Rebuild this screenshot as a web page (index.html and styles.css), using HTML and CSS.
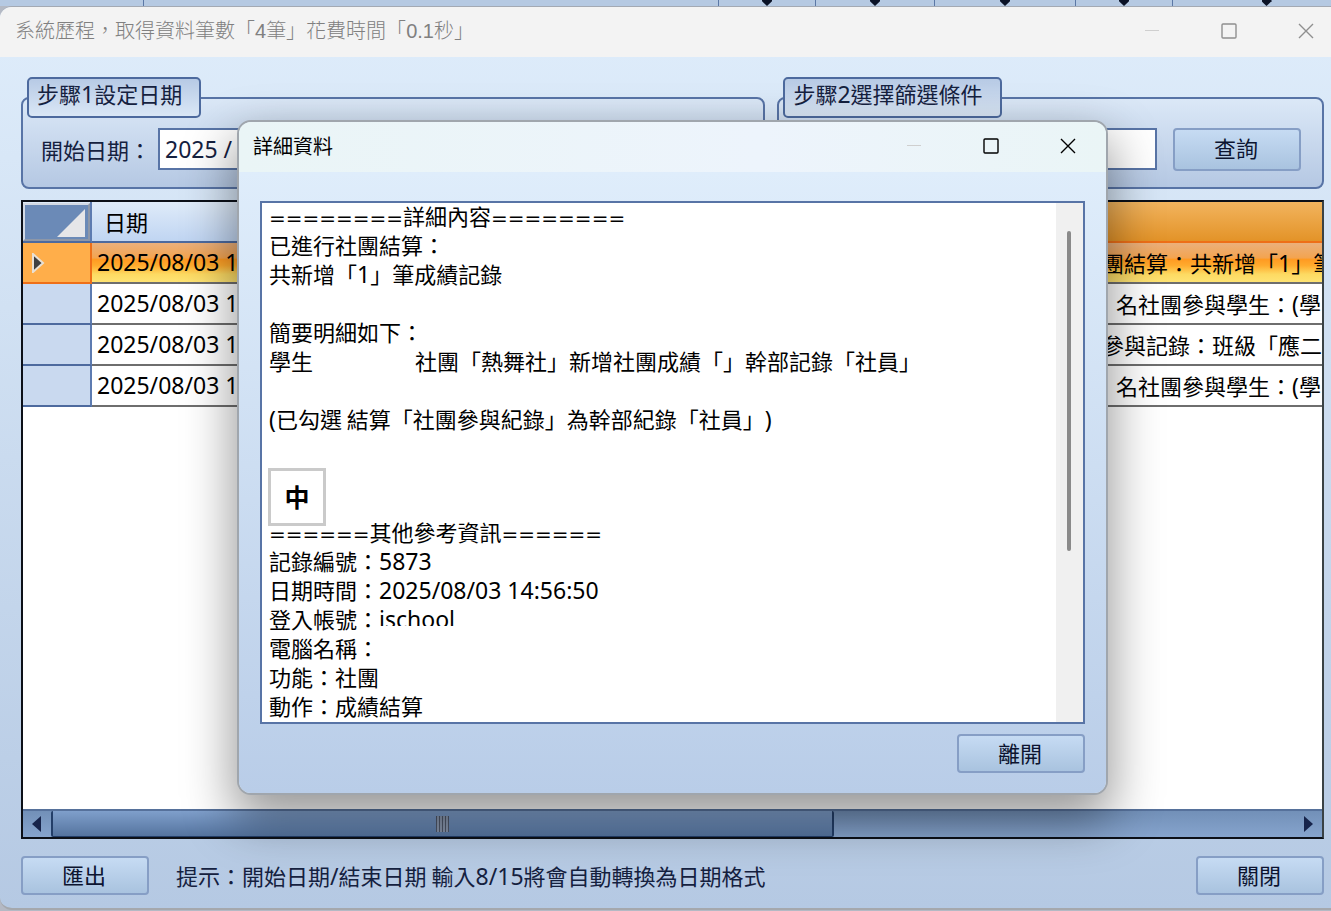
FILE: index.html
```html
<!DOCTYPE html>
<html lang="zh-Hant">
<head>
    <meta charset="UTF-8">
    <meta name="viewport" content="width=device-width, initial-scale=1.0">
    <title>系統歷程</title>
    <link rel="stylesheet" href="styles.css">
</head>
<body>
    <!-- Toolbar of the main application -->
    <div class="toolbar">
        <div class="tool wide-a"></div>
        <div class="tool wide-b"></div>
        <div class="tool w97"><i class="arrow"></i></div>
        <div class="tool w119"><i class="arrow"></i></div>
        <div class="tool w141"><i class="arrow"></i></div>
        <div class="tool w97"><i class="arrow"></i></div>
        <div class="tool w188"><i class="arrow"></i></div>
    </div>

    <div class="window">
        <div class="title-bar">
            <h1>系統歷程，取得資料筆數「<span class="title-num">4</span>筆」花費時間「<span class="title-num">0.1</span>秒」</h1>
            <div class="controls">
                <button class="control disabled" aria-label="最小化"><svg width="16" height="16"><path d="M1 7.5H15"/></svg></button>
                <button class="control" aria-label="最大化"><svg width="16" height="16"><rect x="1" y="1" width="14" height="14" rx="1"/></svg></button>
                <button class="control" aria-label="關閉"><svg width="16" height="16"><path d="M1 1L15 15M15 1L1 15"/></svg></button>
            </div>
        </div>

        <div class="window-body">
            <div class="steps">
                <fieldset class="step">
                    <legend>步驟<span class="num">1</span>設定日期</legend>
                    <div class="step-row">
                        <label for="startDate">開始日期：</label>
                        <input type="text" id="startDate" class="text-box" value="2025 /">
                    </div>
                </fieldset>
                <fieldset class="step">
                    <legend>步驟<span class="num">2</span>選擇篩選條件</legend>
                    <div class="step-row filter-row">
                        <input type="text" class="text-box" aria-label="篩選條件">
                        <button class="btn">查詢</button>
                    </div>
                </fieldset>
            </div>

            <div class="grid">
                <table class="log">
                    <thead>
                        <tr>
                            <th class="corner"><div class="corner-box"><svg width="28" height="28"><path d="M28 0V28H0Z" fill="#e6e6e8"/></svg></div></th>
                            <th class="date">日期</th>
                            <th class="desc"></th>
                        </tr>
                    </thead>
                    <tbody>
                        <tr class="selected">
                            <th><svg width="14" height="20"><path d="M2 1L12 10L2 19Z" fill="#404040" stroke="#e8e0d4" stroke-width="2"/></svg></th>
                            <td class="num">2025/08/03 1</td>
                            <td>已進行社團結算：共新增「<span class="num">1</span>」筆</td>
                        </tr>
                        <tr>
                            <th></th>
                            <td class="num">2025/08/03 1</td>
                            <td><span class="blank"></span>名社團參與學生：<span class="num">(</span>學</td>
                        </tr>
                        <tr>
                            <th></th>
                            <td class="num">2025/08/03 1</td>
                            <td><span class="blank short"></span>參與記錄：班級「應二</td>
                        </tr>
                        <tr>
                            <th></th>
                            <td class="num">2025/08/03 1</td>
                            <td><span class="blank"></span>名社團參與學生：<span class="num">(</span>學</td>
                        </tr>
                    </tbody>
                </table>
                <div class="h-scroll">
                    <button class="scroll-btn" aria-label="向左"><svg width="10" height="16"><path d="M9 0V16L0 8Z" fill="#17244b"/></svg></button>
                    <div class="h-track"><div class="h-thumb"><i class="grip"></i></div></div>
                    <button class="scroll-btn" aria-label="向右"><svg width="10" height="16"><path d="M1 0V16L10 8Z" fill="#17244b"/></svg></button>
                </div>
            </div>

            <div class="footer">
                <button class="btn">匯出</button>
                <p class="hint">提示：開始日期<span class="num">/</span>結束日期 輸入<span class="num">8/15</span>將會自動轉換為日期格式</p>
                <button class="btn">關閉</button>
            </div>
        </div>
    </div>

    <!-- Detail dialog -->
    <div class="dialog" role="dialog" aria-labelledby="dialogTitle">
        <div class="title-bar">
            <h2 id="dialogTitle">詳細資料</h2>
            <div class="controls">
                <button class="control disabled" aria-label="最小化"><svg width="16" height="16"><path d="M1 7.5H15"/></svg></button>
                <button class="control" aria-label="最大化"><svg width="16" height="16"><rect x="1" y="1" width="14" height="14" rx="1"/></svg></button>
                <button class="control" aria-label="關閉"><svg width="16" height="16"><path d="M1 1L15 15M15 1L1 15"/></svg></button>
            </div>
        </div>
        <div class="dialog-body">
            <div class="detail">
                <div class="detail-text">
                    <div class="content">
                        <p><span class="rule">========</span>詳細內容<span class="rule">========</span></p>
                        <p>已進行社團結算：</p>
                        <p>共新增「<span class="num">1</span>」筆成績記錄</p>
                        <p></p>
                        <p>簡要明細如下：</p>
                        <p>學生<span class="blank"></span>社團「熱舞社」新增社團成績「」幹部記錄「社員」</p>
                        <p></p>
                        <p><span class="num">(</span>已勾選 結算「社團參與紀錄」為幹部紀錄「社員」<span class="num">)</span></p>
                    </div>
                    <div class="reference">
                        <p><span class="rule">======</span>其他參考資訊<span class="rule">======</span></p>
                        <p>記錄編號：<span class="num">5873</span></p>
                        <p>日期時間：<span class="num">2025/08/03 14:56:50</span></p>
                        <p>登入帳號：<span class="num">ischool</span></p>
                        <p>電腦名稱：<span class="mask"></span></p>
                        <p>功能：社團</p>
                        <p>動作：成績結算</p>
                    </div>
                    <div class="ime">中</div>
                </div>
                <div class="v-track"><div class="v-thumb"></div></div>
            </div>
            <button class="btn">離開</button>
        </div>
    </div>
</body>
</html>
```

FILE: styles.css
```css
* {
    box-sizing: border-box;
}

body {
    margin: 0;
    min-height: 100vh;
    display: flex;
    flex-direction: column;
    position: relative;
    overflow: hidden;
    background-color: #b4b9c4;
    font-family: "Noto Sans CJK TC", sans-serif;
    font-size: 22px;
    line-height: 29px;
    text-spacing-trim: space-all;
    color: #000;
}

h1, h2, p {
    margin: 0;
    font-weight: normal;
}

button, input {
    font-family: inherit;
    font-size: 22px;
    color: inherit;
}

.num {
    font-family: "Noto Sans", sans-serif;
    font-size: 23px;
}

/* toolbar */
.toolbar {
    display: flex;
    height: 6px;
    overflow: hidden;
    background-color: #b5c9e2;
}

.tool {
    flex: none;
    display: flex;
    justify-content: center;
    border-right: 1px solid #5b78a6;
}

.wide-a { width: 144px; }
.wide-b { width: 575px; }
.w97 { width: 97px; }
.w119 { width: 119px; }
.w141 { width: 141px; }
.w188 { width: 188px; }

.arrow {
    width: 10px;
    height: 6px;
    background-color: #0a1226;
    clip-path: polygon(0 0, 100% 0, 100% 20%, 50% 100%, 0 20%);
}

/* windows */
.window {
    flex: 1;
    display: flex;
    flex-direction: column;
    margin-bottom: 1px;
    border-top: 1px solid #a3a9b3;
    border-bottom: 2px solid #a5a8ad;
    border-radius: 12px 0 0 12px;
    overflow: hidden;
    background: linear-gradient(#dfedfb, #b5c9e3);
}

.title-bar {
    display: flex;
    align-items: center;
    height: 50px;
    padding-left: 15px;
    background-color: #f3f3f3;
}

.title-bar h1, .title-bar h2 {
    flex: 1;
    padding-bottom: 3px;
    font-size: 20px;
}

.title-bar h1 {
    font-weight: 300;
    color: #808080;
}

.title-num {
    font-family: "Liberation Sans", sans-serif;
}

.controls {
    display: flex;
    padding-bottom: 2px;
}

.window > .title-bar .controls {
    margin-right: -13px;
    color: #8f8f8f;
}

.control {
    width: 77px;
    height: 48px;
    padding: 0;
    border: none;
    background: none;
    display: flex;
    align-items: center;
    justify-content: center;
}

.control svg {
    fill: none;
    stroke: currentColor;
    stroke-width: 1.4;
}

.control.disabled svg {
    stroke: #cfcfcf;
    stroke-width: 1;
}

.window-body {
    flex: 1;
    display: flex;
    flex-direction: column;
    padding: 20px 7px 13px 21px;
}

/* search steps */
.steps {
    display: grid;
    grid-template-columns: 745fr 547fr;
    gap: 12px;
}

.step {
    min-width: 0;
    margin: 0;
    padding: 9px 21px 16px 18px;
    border: 2px solid #5874a6;
    border-radius: 8px;
    background: linear-gradient(#dbe8f7, #b5c8e3);
    color: #15213f;
}

.step legend {
    margin-left: -14px;
    height: 41px;
    padding: 0 17px 0 8px;
    line-height: 29px;
    border: 2px solid #4d6a9e;
    border-radius: 5px;
    background: linear-gradient(#b7cae5, #dae7f6);
}

.step-row {
    display: flex;
    align-items: center;
    height: 44px;
}

.step-row label {
    width: 117px;
}

.filter-row {
    gap: 16px;
}

.text-box {
    flex: 1;
    min-width: 0;
    height: 42px;
    padding: 0 5px;
    border: 2px solid #5874a6;
    background-color: #fff;
    font-family: "Noto Sans", sans-serif;
    font-size: 23px;
}

.btn {
    flex: none;
    width: 128px;
    height: 39px;
    padding: 0 2px 4px 0;
    border: 2px solid #869ec5;
    border-radius: 4px;
    background: linear-gradient(#c6dbf3, #a9c3df);
    color: #0c1430;
}

.filter-row .btn {
    height: 43px;
}

/* log grid */
.grid {
    flex: 1;
    display: flex;
    flex-direction: column;
    justify-content: space-between;
    margin: 11px 0 17px;
    border: 2px solid #0c1018;
    border-right-color: #3a4245;
    background-color: #fff;
    overflow: hidden;
}

.log {
    width: 100%;
    table-layout: fixed;
    border-collapse: separate;
    border-spacing: 0;
}

.log th, .log td {
    height: 41px;
    padding: 0 0 0 5px;
    border-bottom: 2px solid #6e6e6e;
    font-weight: normal;
    text-align: left;
    white-space: nowrap;
    overflow: hidden;
}

.log tbody th {
    border-right: 2px solid #5d7bb0;
    border-bottom-color: #4d6a9e;
    background-color: #c9d9ef;
    padding-left: 8px;
}

.log thead th {
    border-bottom-color: #4d6a9e;
    background: linear-gradient(#dfebf9, #c0d5f2);
}

.log thead .corner {
    width: 69px;
    padding: 0;
    border-right: 2px solid #5d7bb0;
}

.corner-box {
    height: 38px;
    padding: 4px 3px 0 0;
    border: 2px solid #d3dae5;
    border-right-color: #8d97a8;
    border-bottom-color: #8d97a8;
    background-color: #6b8ab7;
    line-height: 0;
    text-align: right;
}

.log thead .date {
    padding-left: 12px;
}

.log thead .desc {
    width: 313px;
    border-bottom-color: #ee6f18;
    background: linear-gradient(#f2b45e, #e39328);
}

.log .selected td {
    background: linear-gradient(#ebb07c, #f3a450 38%, #ff9a22 42%, #ffab2e 58%, #fdda62 80%, #fee373);
}

.log .selected th {
    background-color: #ffae4a;
    border-color: #ee6f18;
}

.selected svg {
    display: block;
}

.blank {
    display: inline-block;
    width: 102px;
}

.blank.short {
    width: 88px;
}

.h-scroll {
    display: flex;
    height: 28px;
    border-top: 2px solid #56719b;
    background: linear-gradient(#7290b8, #86a4cd);
}

.scroll-btn {
    width: 28px;
    padding: 0;
    border: none;
    background: none;
    display: flex;
    align-items: center;
    justify-content: center;
}

.h-track {
    flex: 1;
}

.h-thumb {
    width: 63%;
    height: 100%;
    display: flex;
    align-items: center;
    justify-content: center;
    border: solid #233e68;
    border-width: 0 2px 1px;
    border-radius: 2px;
    background: linear-gradient(#7f9fcb, #55749f);
}

.grip {
    width: 13px;
    height: 16px;
    background: repeating-linear-gradient(90deg, #4c5567 0 1px, #8592a8 1px 3px);
}

.footer {
    display: flex;
    align-items: center;
}

.hint {
    flex: 1;
    padding-left: 27px;
    color: #15213f;
}

/* detail dialog */
.dialog {
    position: absolute;
    top: 120px;
    left: 237px;
    width: 871px;
    border: 2px solid #a0a6ad;
    border-radius: 14px;
    overflow: hidden;
    background-color: #dfedfb;
    box-shadow: 0 22px 50px 4px rgba(0, 0, 0, 0.4);
}

.dialog .title-bar {
    padding-left: 14px;
    background: linear-gradient(90deg, #eaf5f6, #edf4fc 60%, #eaf5f6);
}

.dialog-body {
    display: flex;
    flex-direction: column;
    align-items: flex-end;
    gap: 10px;
    padding: 29px 21px 20px;
    background: linear-gradient(#dfedfb, #b9cde8);
}

.detail {
    width: 100%;
    display: flex;
    border: 2px solid #5874a6;
    background-color: #fff;
}

.detail-text {
    flex: 1;
    position: relative;
    padding: 0 7px;
    white-space: nowrap;
}

.detail p {
    height: 29px;
    line-height: 25px;
}

.reference {
    margin-top: 84px;
}

.rule {
    font-family: "DejaVu Sans", sans-serif;
    font-size: 20px;
}

.mask {
    position: absolute;
    width: 120px;
    height: 29px;
    margin-top: -9px;
    background-color: #fff;
}

/* input method indicator floats over the text */
.ime {
    position: absolute;
    left: 6px;
    top: 265px;
    width: 58px;
    height: 58px;
    border: 3px solid #cacaca;
    background-color: #fff;
    font-size: 25px;
    font-weight: bold;
    line-height: 50px;
    text-align: center;
}

.v-track {
    width: 27px;
    padding: 28px 0 0 11px;
    background-color: #f0f0f0;
}

.v-thumb {
    width: 4px;
    height: 320px;
    border-radius: 2px;
    background-color: #8a8a8a;
}
```
